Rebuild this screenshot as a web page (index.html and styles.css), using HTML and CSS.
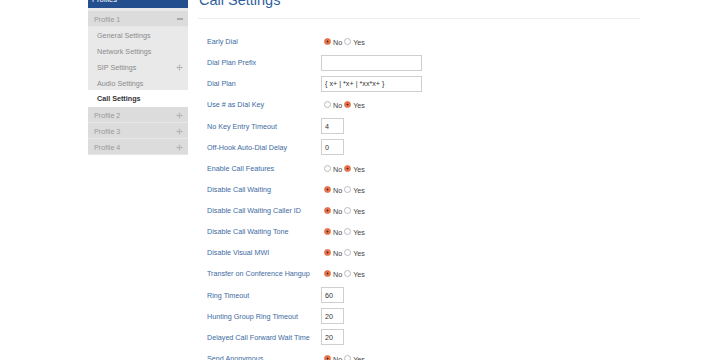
FILE: index.html
```html
<!DOCTYPE html>
<html>
<head>
<meta charset="utf-8">
<link rel="stylesheet" href="styles.css">
</head>
<body>
<div class="page">
  <aside class="sidebar">
    <div class="side-head">Profiles</div>
    <div class="side-body">
      <div class="profile open"><span>Profile 1</span><span class="minus"></span></div>
      <ul class="sub">
        <li>General Settings</li>
        <li>Network Settings</li>
        <li><span>SIP Settings</span><svg class="mv" viewBox="0 0 9 9"><path d="M4.5 0.5 L3 2 H4 V4 H2 V3 L0.5 4.5 L2 6 V5 H4 V7 H3 L4.5 8.5 L6 7 H5 V5 H7 V6 L8.5 4.5 L7 3 V4 H5 V2 H6 Z"/></svg></li>
        <li>Audio Settings</li>
        <li class="active">Call Settings</li>
      </ul>
      <div class="profile"><span>Profile 2</span><svg class="mv" viewBox="0 0 9 9"><path d="M4.5 0.5 L3 2 H4 V4 H2 V3 L0.5 4.5 L2 6 V5 H4 V7 H3 L4.5 8.5 L6 7 H5 V5 H7 V6 L8.5 4.5 L7 3 V4 H5 V2 H6 Z"/></svg></div>
      <div class="profile"><span>Profile 3</span><svg class="mv" viewBox="0 0 9 9"><path d="M4.5 0.5 L3 2 H4 V4 H2 V3 L0.5 4.5 L2 6 V5 H4 V7 H3 L4.5 8.5 L6 7 H5 V5 H7 V6 L8.5 4.5 L7 3 V4 H5 V2 H6 Z"/></svg></div>
      <div class="profile"><span>Profile 4</span><svg class="mv" viewBox="0 0 9 9"><path d="M4.5 0.5 L3 2 H4 V4 H2 V3 L0.5 4.5 L2 6 V5 H4 V7 H3 L4.5 8.5 L6 7 H5 V5 H7 V6 L8.5 4.5 L7 3 V4 H5 V2 H6 Z"/></svg></div>
    </div>
  </aside>
  <main class="main">
    <h1 class="title">Call Settings</h1>
    <div class="form">
      <div class="row"><label>Early Dial</label><div class="radios"><input type="radio" name="r1" checked><span>No</span><input type="radio" name="r1"><span>Yes</span></div></div>
      <div class="row"><label>Dial Plan Prefix</label><input class="txt wide" type="text" value=""></div>
      <div class="row"><label>Dial Plan</label><input class="txt wide" type="text" value="{ x+ | *x+ | *xx*x+ }"></div>
      <div class="row"><label>Use # as Dial Key</label><div class="radios"><input type="radio" name="r2"><span>No</span><input type="radio" name="r2" checked><span>Yes</span></div></div>
      <div class="row"><label>No Key Entry Timeout</label><input class="txt small" type="text" value="4"></div>
      <div class="row"><label>Off-Hook Auto-Dial Delay</label><input class="txt small" type="text" value="0"></div>
      <div class="row"><label>Enable Call Features</label><div class="radios"><input type="radio" name="r3"><span>No</span><input type="radio" name="r3" checked><span>Yes</span></div></div>
      <div class="row"><label>Disable Call Waiting</label><div class="radios"><input type="radio" name="r4" checked><span>No</span><input type="radio" name="r4"><span>Yes</span></div></div>
      <div class="row"><label>Disable Call Waiting Caller ID</label><div class="radios"><input type="radio" name="r5" checked><span>No</span><input type="radio" name="r5"><span>Yes</span></div></div>
      <div class="row"><label>Disable Call Waiting Tone</label><div class="radios"><input type="radio" name="r6" checked><span>No</span><input type="radio" name="r6"><span>Yes</span></div></div>
      <div class="row"><label>Disable Visual MWI</label><div class="radios"><input type="radio" name="r7" checked><span>No</span><input type="radio" name="r7"><span>Yes</span></div></div>
      <div class="row"><label>Transfer on Conference Hangup</label><div class="radios"><input type="radio" name="r8" checked><span>No</span><input type="radio" name="r8"><span>Yes</span></div></div>
      <div class="row"><label>Ring Timeout</label><input class="txt small" type="text" value="60"></div>
      <div class="row"><label>Hunting Group Ring Timeout</label><input class="txt small" type="text" value="20"></div>
      <div class="row"><label>Delayed Call Forward Wait Time</label><input class="txt small" type="text" value="20"></div>
      <div class="row"><label>Send Anonymous</label><div class="radios"><input type="radio" name="r9" checked><span>No</span><input type="radio" name="r9"><span>Yes</span></div></div>
    </div>
  </main>
</div>
</body>
</html>
```

FILE: styles.css
```css
* { box-sizing: border-box; }
html, body { margin: 0; padding: 0; background: #fff; }
body { font-family: "Liberation Sans", Arial, sans-serif; overflow: hidden; height: 360px; }

.page { display: flex; align-items: flex-start; padding-left: 88px; margin-top: -9px; }

.sidebar { width: 100px; flex: none; }
.side-head { height: 17px; background: #244f8e; color: #fff; font-size: 7.5px; line-height: 17px; padding-left: 4px; }
.side-body { background: #e9e9e9; padding-top: 3px; }
.profile { height: 16px; background: #dcdcdc; color: #9a9a9a; font-size: 7.2px; display: flex; align-items: center; justify-content: space-between; padding: 1px 5px 0 6px; border-bottom: 1px solid #e6e6e6; }
.minus { width: 6px; height: 2px; background: #aaa; }
.mv { width: 7px; height: 7px; fill: #b0b0b0; }
.sub { list-style: none; margin: 0; padding: 0; }
.sub li { height: 15.8px; display: flex; align-items: center; justify-content: space-between; padding: 2px 5px 0 9px; color: #8a8a8a; font-size: 7.2px; }
.sub li.active { background: #fff; color: #333; font-weight: bold; height: 17.2px; padding-top: 0; }

.main { margin-left: 10px; width: 442px; }
.title { margin: 0; font-weight: normal; color: #2f5f9c; font-size: 14.5px; line-height: 18px; height: 28px; padding-left: 1px; border-bottom: 1px solid #ececec; }
.form { padding-top: 12px; }
.row { height: 21.13px; display: flex; align-items: center; padding-left: 9px; }
.row label { width: 114px; flex: none; color: #3d6aa2; font-size: 7.2px; }
.txt { height: 16px; border: 1px solid #cfcfcf; font-family: "Liberation Sans", Arial, sans-serif; font-size: 7.2px; color: #333; padding: 0 3px; outline: none; }
.txt.wide { width: 101px; }
.txt.small { width: 23px; }
.radios { display: flex; align-items: center; padding-left: 3px; font-size: 7.2px; color: #444; }
.radios span { margin: 0 2px 0 2px; position: relative; top: 1px; }
.radios input { -webkit-appearance: none; appearance: none; margin: 0; width: 7px; height: 7px; border-radius: 50%; border: 1px solid #bbb; background: #fff; }
.radios input:checked { background: radial-gradient(circle, #5a2a1a 0 0.8px, #e8754f 1.2px); border-color: #e0683f; }
```
